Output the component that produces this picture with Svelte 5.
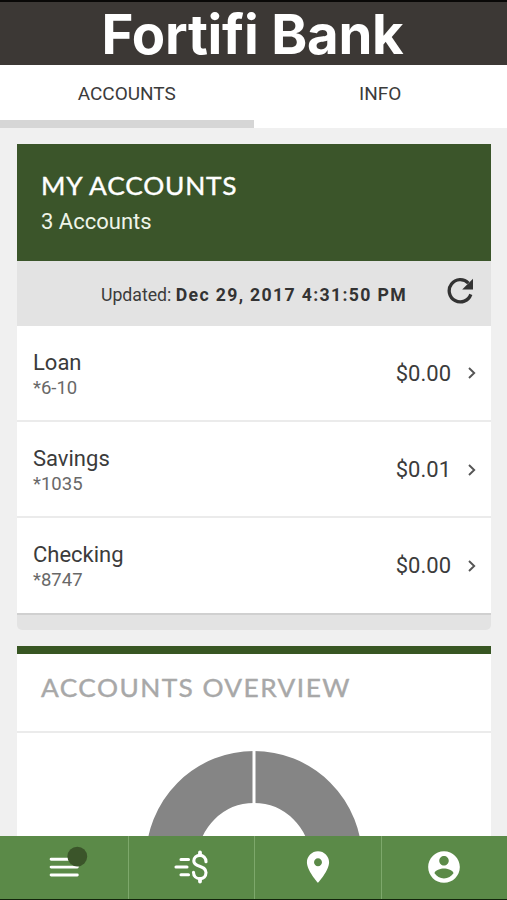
<script lang="ts">
  interface Account {
    name: string;
    mask: string;
    balance: string;
  }

  const accounts: Account[] = [
    { name: 'Loan', mask: '*6-10', balance: '$0.00' },
    { name: 'Savings', mask: '*1035', balance: '$0.01' },
    { name: 'Checking', mask: '*8747', balance: '$0.00' }
  ];

  const tabs = ['ACCOUNTS', 'INFO'];
  let activeTab = $state(0);
</script>

<div class="app">
  <header class="brand"><span>Fortifi Bank</span></header>

  <div class="tabs" role="tablist">
    {#each tabs as tab, index (tab)}
      <button
        type="button"
        role="tab"
        class="tab"
        class:active={activeTab === index}
        aria-selected={activeTab === index}
        onclick={() => (activeTab = index)}
      >
        {tab}
      </button>
    {/each}
  </div>

  <main class="content">
    <section class="card">
      <div class="card-head">
        <h2 class="title"><span class="wide">MY ACCOUNTS</span></h2>
        <p>{accounts.length} Accounts</p>
      </div>

      <div class="updated">
        <span class="stamp">Updated: <strong>Dec 29, 2017 4:31:50 PM</strong></span>
        <button type="button" class="refresh" aria-label="Refresh">
          <svg width="26" height="26" viewBox="0 0 26 26">
            <path d="M21.4 5.2A11.1 11.1 0 1 0 23.8 16.4" fill="none" stroke="#333" stroke-width="3.3" />
            <path d="M26 0.8V11.6H15.2Z" fill="#333" />
          </svg>
        </button>
      </div>

      <ul class="list">
        {#each accounts as account (account.mask)}
          <li class="row">
            <div class="info">
              <span class="name">{account.name}</span>
              <span class="mask">{account.mask}</span>
            </div>
            <span class="balance">{account.balance}</span>
            <svg class="chevron" width="8" height="12" viewBox="0 0 8 12">
              <path d="M1 1L6.2 6L1 11" fill="none" stroke="#555" stroke-width="1.9" />
            </svg>
          </li>
        {/each}
      </ul>
      <div class="card-foot"></div>
    </section>

    <section class="overview">
      <h2 class="title"><span class="wide overview-title">ACCOUNTS OVERVIEW</span></h2>
      <div class="chart">
        <svg width="220" height="220" viewBox="0 0 220 220">
          <circle cx="110" cy="110" r="82" fill="none" stroke="#858585" stroke-width="52" />
          <path d="M110 0V60" stroke="#fff" stroke-width="3" />
        </svg>
      </div>
    </section>
  </main>

  <nav class="bottom-nav">
    <button type="button" aria-label="Menu">
      <svg class="menu-icon" width="38" height="42" viewBox="0 0 38 42">
        <path d="M6.1 13.2H32.3M6.1 21.1H32.3M6.1 29H32.3" stroke="#fff" stroke-width="2.9" stroke-linecap="round" />
        <circle cx="32.3" cy="10.6" r="9.9" fill="#3b552a" />
      </svg>
    </button>
    <button type="button" aria-label="Transfer money">
      <svg width="38" height="34" viewBox="0 0 38 34">
        <g fill="none" stroke="#fff" stroke-width="3.1" stroke-linecap="round" stroke-linejoin="round">
          <path d="M8 9.5H15.5M3 17H14M8 24.8H15.5" />
          <path d="M33 11.8C33 7.9 30.2 5.4 27 5.4C23.4 5.4 20.8 7.7 20.8 11C20.8 18 33 14.6 33 22.6C33 26.3 30.4 28.7 27 28.7C23.4 28.7 20.5 26.3 20.5 22.2" />
          <path d="M27 2.5V5M27 29V31.6" stroke-width="3.8" />
        </g>
      </svg>
    </button>
    <button type="button" aria-label="Locations">
      <svg width="38" height="38" viewBox="0 0 24 24">
        <path d="M12 2C8.13 2 5 5.13 5 9c0 5.25 7 13 7 13s7-7.75 7-13c0-3.87-3.13-7-7-7zm0 9.5c-1.38 0-2.5-1.12-2.5-2.5s1.12-2.5 2.5-2.5 2.5 1.12 2.5 2.5-1.12 2.5-2.5 2.5z" fill="#fff" />
      </svg>
    </button>
    <button type="button" aria-label="Profile">
      <svg width="38" height="38" viewBox="0 0 24 24">
        <path d="M12 2C6.48 2 2 6.48 2 12s4.48 10 10 10 10-4.48 10-10S17.52 2 12 2zm0 3c1.66 0 3 1.34 3 3s-1.34 3-3 3-3-1.34-3-3 1.34-3 3-3zm0 14.2c-2.5 0-4.71-1.28-6-3.22.03-1.99 4-3.08 6-3.08 1.99 0 5.97 1.09 6 3.08-1.29 1.94-3.5 3.22-6 3.22z" fill="#fff" />
      </svg>
    </button>
  </nav>
</div>

<style>
  :global(body) {
    margin: 0;
    background: #f0f0f0;
  }

  .app {
    display: flex;
    flex-direction: column;
    box-sizing: border-box;
    width: 507px;
    height: 900px;
    overflow: hidden;
    border-top: 2px solid #090807;
    border-bottom: 1px solid #12240b;
    background: #f0f0f0;
    font-family: Roboto, sans-serif;
    color: #3b3b3b;
  }

  button {
    padding: 0;
    border: 0;
    background: none;
    font: inherit;
    color: inherit;
  }

  h2,
  p,
  ul {
    margin: 0;
    padding: 0;
  }

  .brand {
    display: flex;
    flex: none;
    justify-content: center;
    box-sizing: border-box;
    height: 63px;
    padding-right: 2px;
    background: #3c3835;
    color: #fff;
    font: 700 54.5px/64px Inter, sans-serif;
    letter-spacing: -0.25px;
    white-space: nowrap;
  }

  .tabs {
    display: flex;
    flex: none;
    height: 63px;
    background: #fff;
  }

  .tab {
    box-sizing: border-box;
    flex: 1;
    border-bottom: 8px solid transparent;
    font-size: 19px;
    line-height: 57px;
  }

  .tab.active {
    border-bottom-color: #d6d6d6;
  }

  .content {
    display: flex;
    flex: 1;
    flex-direction: column;
    gap: 16px;
    min-height: 0;
    padding: 16px 16px 0 17px;
    overflow: hidden;
  }

  .card,
  .overview {
    flex: none;
  }

  .card-head {
    box-sizing: border-box;
    height: 117px;
    padding: 25px 24px 0;
    background: #3b552a;
    color: #fff;
  }

  .card-head p {
    padding-top: 5px;
    font-size: 22px;
    line-height: 32px;
    color: #eef4e8;
  }

  .title {
    font: 400 25.5px/32px Lato, sans-serif;
    white-space: nowrap;
  }

  .wide {
    display: inline-block;
    transform: scaleX(1.03);
    transform-origin: left;
    letter-spacing: 0.8px;
    -webkit-text-stroke: 0.4px currentColor;
  }

  .overview-title {
    letter-spacing: 1.4px;
  }

  .updated {
    display: flex;
    align-items: center;
    justify-content: flex-end;
    gap: 40px;
    box-sizing: border-box;
    height: 64.5px;
    padding-right: 18px;
    background: #e3e3e3;
    font-size: 17.7px;
  }

  .stamp {
    padding-top: 4px;
    white-space: nowrap;
  }

  .stamp strong {
    color: #333;
    letter-spacing: 1.33px;
  }

  .refresh {
    display: flex;
    padding-bottom: 4px;
  }

  .list {
    list-style: none;
    background: #fff;
  }

  .row {
    display: flex;
    align-items: center;
    box-sizing: border-box;
    height: 96.4px;
    padding: 1px 15px 0 16px;
    border-bottom: 2px solid #ebebeb;
  }

  .row:last-child {
    border-bottom-color: #d0d0d0;
  }

  .info {
    display: flex;
    flex: 1;
    flex-direction: column;
    padding-top: 3px;
  }

  .name {
    font-size: 22px;
    line-height: 26px;
  }

  .mask {
    font-size: 18.5px;
    line-height: 24px;
    color: #686868;
  }

  .balance {
    padding-top: 1px;
    font-size: 22px;
    line-height: 26px;
  }

  .chevron {
    margin-left: 17px;
  }

  .card-foot {
    height: 15.5px;
    border-radius: 0 0 5px 5px;
    background: #e3e3e3;
  }

  .overview {
    border-top: 8px solid #385623;
    background: #fff;
  }

  .overview .title {
    height: 60px;
    padding: 17px 24px 0;
    border-bottom: 2px solid #ebebeb;
    color: #a8a8a8;
  }

  .chart {
    display: flex;
    justify-content: center;
    padding-top: 16px;
  }

  .bottom-nav {
    display: flex;
    flex: none;
    height: 63px;
    background: #5b8a48;
  }

  .bottom-nav button {
    display: flex;
    flex: 1;
    align-items: center;
    justify-content: center;
    padding-bottom: 2px;
  }

  .bottom-nav button:first-child {
    flex: none;
    width: 128px;
  }

  .bottom-nav button + button {
    border-left: 1px solid #7da86b;
  }

  /* The badge hangs past the icon's box */
  .menu-icon {
    overflow: visible;
  }
</style>
